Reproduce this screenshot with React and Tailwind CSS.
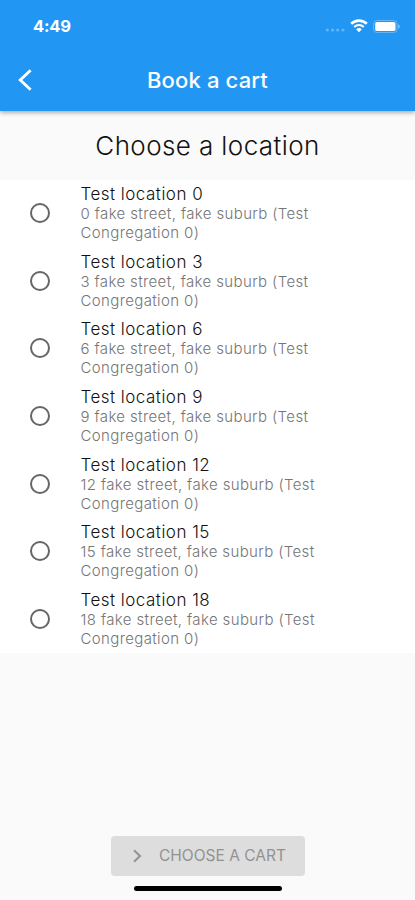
import React, { useState } from 'react';

const locations = [0, 3, 6, 9, 12, 15, 18].map((n) => ({
  id: n,
  name: `Test location ${n}`,
  street: `${n} fake street, fake suburb (Test`,
  congregation: 'Congregation 0)',
}));

const StatusBar = () => (
  <div className="flex h-[52px] items-center justify-between pl-[33px] pr-[15px]">
    <span className="text-[16.5px] font-bold leading-5 tracking-[-0.2px]">4:49</span>
    <div className="flex items-center">
      <svg className="mr-[5px] mt-2" width="20" height="4" viewBox="0 0 20 4" fill="white" fillOpacity="0.3">
        <circle cx="2.3" cy="2" r="1.6" />
        <circle cx="7.5" cy="2" r="1.6" />
        <circle cx="12.7" cy="2" r="1.6" />
        <circle cx="17.9" cy="2" r="1.6" />
      </svg>
      <svg className="mr-[5px]" width="18" height="14" viewBox="0 0 18 14" fill="none" stroke="white">
        <path d="M1.2 4.8a11.2 11.2 0 0 1 15.6 0" strokeWidth="2.6" />
        <path d="M4.2 7.9a7 7 0 0 1 9.6 0" strokeWidth="2.1" />
        <path d="M9 13.2 6.2 10.4a4 4 0 0 1 5.6 0Z" fill="white" stroke="none" />
      </svg>
      <svg width="27" height="13" viewBox="0 0 27 13">
        <rect x="0.5" y="0.5" width="23.6" height="12" rx="3.4" fill="none" stroke="white" strokeOpacity="0.3" />
        <rect x="2.2" y="2" width="20.3" height="9" rx="1.8" fill="white" />
        <path d="M25.2 4.3v4.4c1-.4 1.5-1.2 1.5-2.2s-.5-1.8-1.5-2.2Z" fill="white" fillOpacity="0.5" />
      </svg>
    </div>
  </div>
);

const App = () => {
  const [selected, setSelected] = useState(null);

  return (
    <div className="flex h-[900px] w-[415px] flex-col overflow-hidden bg-[#fafafa] font-['Inter',sans-serif]">
      <header className="z-10 h-[111px] shrink-0 bg-[#2196f3] text-white shadow-[0_2px_4px_rgba(0,0,0,0.3)]">
        <StatusBar />
        <div className="grid h-[56px] grid-cols-[60px_1fr_60px] items-center">
          <button className="pl-[18px]" aria-label="Back">
            <svg width="14" height="22" viewBox="0 0 14 22" fill="none" stroke="white" strokeWidth="2.9">
              <path d="M12.6 1.3 2.3 11l10.3 9.7" />
            </svg>
          </button>
          <h1 className="whitespace-nowrap text-center text-[22px] font-medium leading-7 tracking-[0.15px]">Book a cart</h1>
        </div>
      </header>

      <h2 className="flex h-[69px] shrink-0 items-center justify-center whitespace-nowrap text-[26px] font-light leading-8 tracking-[0.4px] text-[#111111]">
        Choose a location
      </h2>

      {/* Location list */}
      <ul className="h-[473px] shrink-0 bg-white">
        {locations.map((location) => (
          <li key={location.id} className="h-[67.6px]">
            <button
              className="flex h-full w-full items-center pb-[1.2px] text-left"
              onClick={() => setSelected(location.id)}
            >
              <span className="ml-[30px] mr-[30.5px] flex h-5 w-5 shrink-0 items-center justify-center rounded-full border-2 border-[#666666]">
                {selected === location.id && <span className="h-2.5 w-2.5 rounded-full bg-[#2196f3]" />}
              </span>
              <span className="whitespace-nowrap">
                <span className="block text-[17px] font-light leading-[20px] tracking-[0.48px] text-[#111111]">{location.name}</span>
                <span className="block text-[15px] font-light leading-[19px] tracking-[0.37px] text-[#757575]">{location.street}</span>
                <span className="block text-[15px] font-light leading-[19px] tracking-[0.37px] text-[#757575]">{location.congregation}</span>
              </span>
            </button>
          </li>
        ))}
      </ul>

      <div className="mt-auto flex flex-col items-center pb-[9px]">
        <button className="flex h-10 w-[194px] items-center rounded-[4px] bg-[#dddddd] text-[#929292]">
          <svg className="ml-[22.5px] mr-[17px]" width="9" height="14" viewBox="0 0 9 14" fill="none" stroke="currentColor" strokeWidth="2">
            <path d="m1 1.2 6 5.8-6 5.8" />
          </svg>
          <span className="whitespace-nowrap text-[15.5px] leading-5">CHOOSE A CART</span>
        </button>
        <div className="mt-[10px] h-[5px] w-[148px] rounded-full bg-black" />
      </div>
    </div>
  );
};

export default App;
